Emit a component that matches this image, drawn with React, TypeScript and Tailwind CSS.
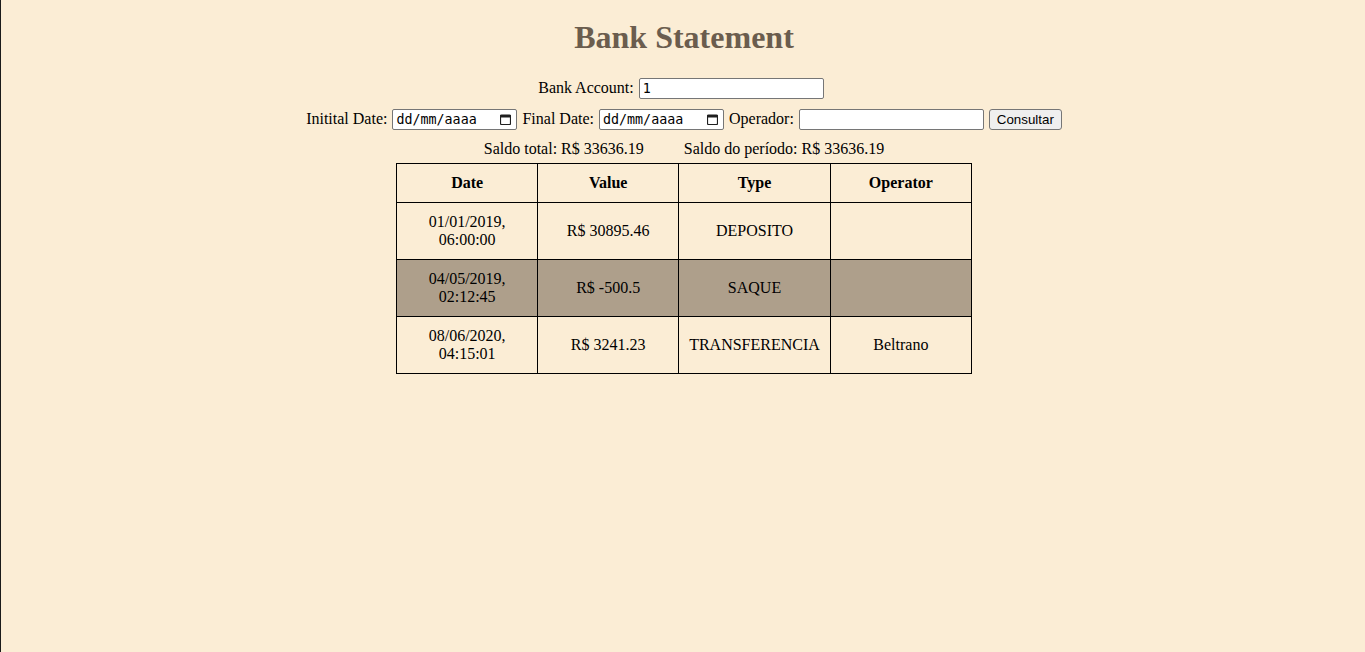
import React from 'react';

const rows = [
    { date: '01/01/2019, 06:00:00', value: 'R$ 30895.46', type: 'DEPOSITO', operator: '' },
    { date: '04/05/2019, 02:12:45', value: 'R$ -500.5', type: 'SAQUE', operator: '' },
    { date: '08/06/2020, 04:15:01', value: 'R$ 3241.23', type: 'TRANSFERENCIA', operator: 'Beltrano' },
];

function DateField() {
    return (
        <div className="flex h-[21px] w-[125px] items-center justify-between rounded-[2px] border border-[#767676] bg-white pl-[3px] pr-[5px] font-['DejaVu_Sans_Mono',monospace] text-[13.33px] text-black">
            <span className="pt-[1px]">dd/mm/aaaa</span>
            <svg width="11" height="11" viewBox="0 0 11 11" className="text-[#1f1f1f]">
                <rect x="0.5" y="1" width="10" height="9.5" rx="1" fill="none" stroke="currentColor" strokeWidth="1.2" />
                <rect x="0.5" y="1" width="10" height="2.5" fill="currentColor" />
            </svg>
        </div>
    );
}

export default function App() {
    return (
        <div className="min-h-screen w-full border-l border-[#1a1a1a] bg-[#fbedd5] pt-[19px] pl-[2px] font-['Liberation_Serif',serif] text-[16px] text-black">
            <h1 className="mb-[21px] text-center text-[32px] leading-[37px] font-bold text-[#6b5d4e]">
                Bank Statement
            </h1>

            <div className="flex h-[22px] items-center justify-center gap-[5px] pr-[6px]">
                <span>Bank Account:</span>
                <input
                    type="text"
                    defaultValue="1"
                    className="h-[21px] w-[185px] rounded-[2px] border border-[#767676] bg-white px-[3px] pt-[1px] font-['DejaVu_Sans_Mono',monospace] text-[13.33px] text-black outline-none"
                />
            </div>

            <div className="mt-[9px] flex h-[22px] items-center justify-center gap-[5px]">
                <span>Initital Date:</span>
                <DateField />
                <span>Final Date:</span>
                <DateField />
                <span>Operador:</span>
                <input
                    type="text"
                    className="h-[21px] w-[185px] rounded-[2px] border border-[#767676] bg-white px-[3px] font-['DejaVu_Sans_Mono',monospace] text-[13.33px] outline-none"
                />
                <button className="h-[21px] w-[73px] rounded-[3px] border border-[#767676] bg-[#efefef] pt-[2px] font-['Liberation_Sans',Arial,sans-serif] text-[13.33px] leading-none text-black">
                    Consultar
                </button>
            </div>

            <div className="mt-[10px] flex h-[18px] items-center justify-center gap-[40px] leading-[18px]">
                <span>Saldo total: R$ 33636.19</span>
                <span>Saldo do período: R$ 33636.19</span>
            </div>

            <table className="mx-auto mt-[5px] border-collapse text-center">
                <thead>
                    <tr>
                        <th className="box-content w-[120px] border border-black p-[10px] leading-[18px]">Date</th>
                        <th className="box-content w-[120px] border border-black p-[10px] leading-[18px]">Value</th>
                        <th className="box-content min-w-[120px] border border-black p-[10px] leading-[18px]">Type</th>
                        <th className="box-content w-[120px] border border-black p-[10px] leading-[18px]">Operator</th>
                    </tr>
                </thead>
                <tbody>
                    {rows.map((r, i) => (
                        <tr key={i} className={i === 1 ? 'bg-[#ae9f8b]' : ''}>
                            <td className="box-content w-[120px] border border-black p-[10px] leading-[18px]">{r.date}</td>
                            <td className="box-content w-[120px] border border-black p-[10px] leading-[18px]">{r.value}</td>
                            <td className="box-content border border-black p-[10px] leading-[18px]">{r.type}</td>
                            <td className="box-content w-[120px] border border-black p-[10px] leading-[18px]">{r.operator}</td>
                        </tr>
                    ))}
                </tbody>
            </table>
        </div>
    );
}
